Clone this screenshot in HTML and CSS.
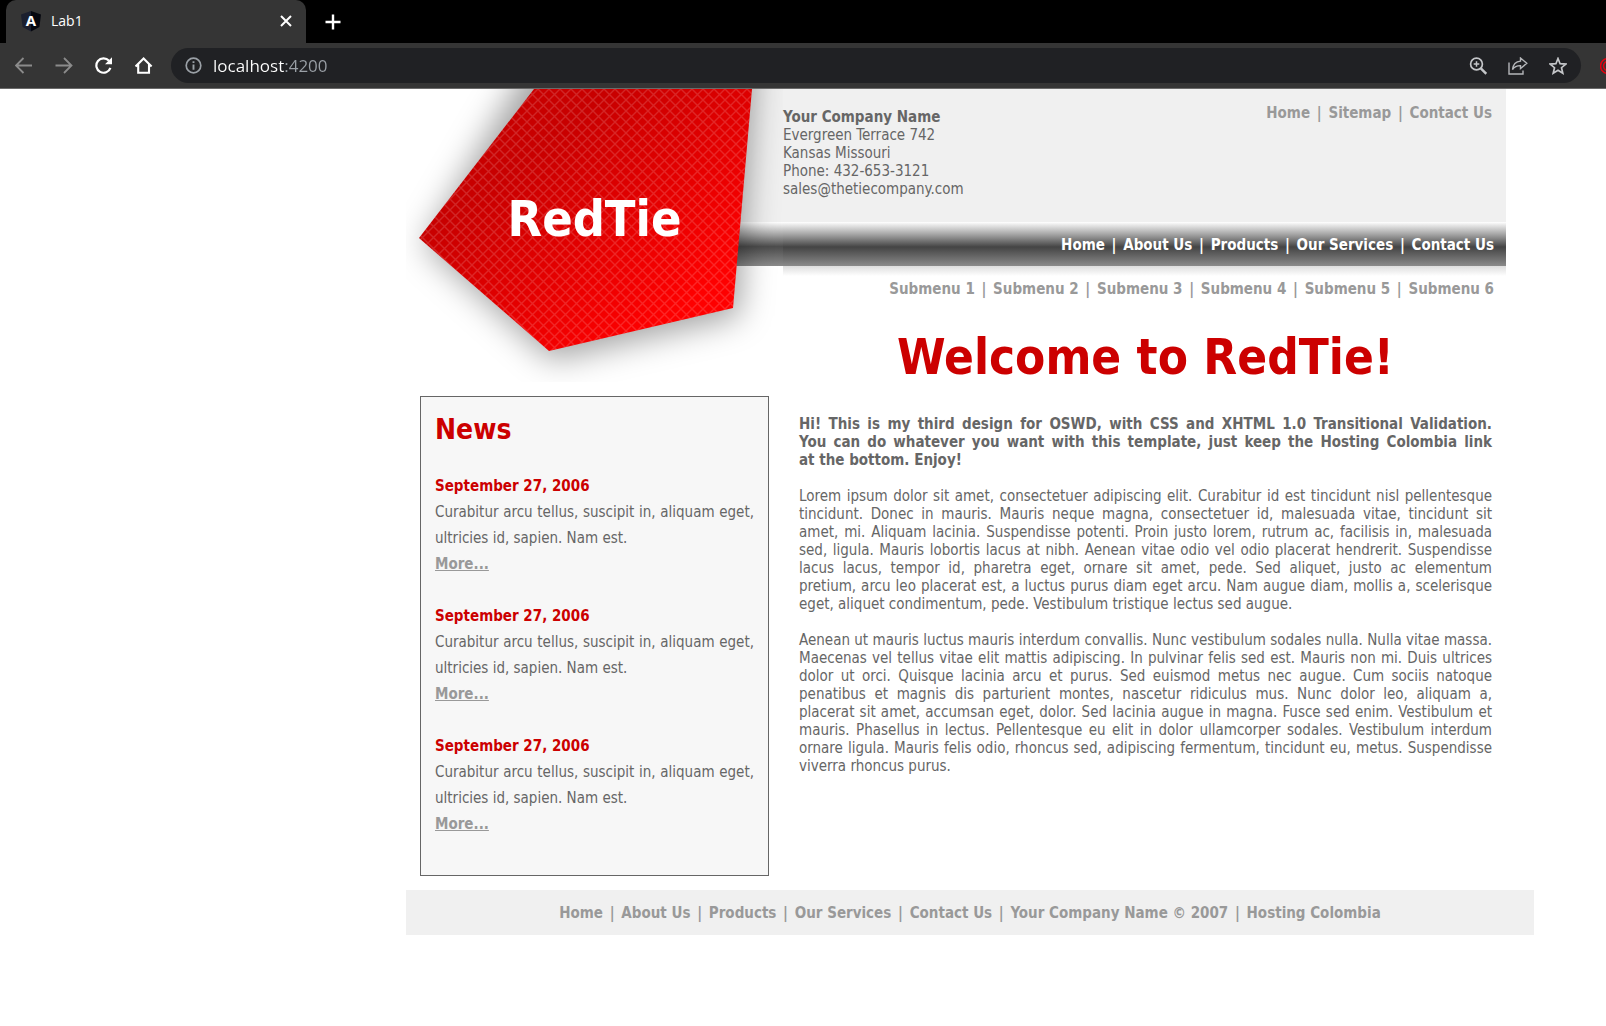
FILE: index.html
```html
<!DOCTYPE html>
<html lang="en">
<head>
<meta charset="utf-8">
<title>Lab1</title>
<link rel="stylesheet" href="styles.css">
</head>
<body>
<div class="browser">
  <div class="tabs">
    <div class="tab">
      <svg class="favicon" width="20" height="20" viewBox="0 0 20 20"><path d="M10 0 20 3.500 18.400 16 10 20.500Z" fill="#05070f"/><path d="M10 0 0 3.500 1.600 16 10 20.500Z" fill="#1b1f2e"/><text x="10" y="15" text-anchor="middle" class="mark">A</text></svg>
      <span class="tab-title">Lab1</span>
      <button class="icon" aria-label="Close tab"><svg width="12" height="12" viewBox="0 0 12 12" fill="none" stroke="#fff" stroke-width="2"><path d="M1 1 11 11M11 1 1 11"/></svg></button>
    </div>
    <button class="icon new-tab" aria-label="New tab"><svg width="16" height="16" viewBox="0 0 16 16" fill="none" stroke="#fff" stroke-width="2.400"><path d="M8 .5V15.500M.5 8H15.500"/></svg></button>
  </div>
  <div class="toolbar">
    <div class="controls">
      <button class="icon" aria-label="Back"><svg width="18" height="18" viewBox="0 0 18 18" fill="none" stroke="#8b8b8b" stroke-width="1.800"><path d="M17 8.500H1.500M8.500 1 1 8.500 8.500 16"/></svg></button>
      <button class="icon" aria-label="Forward"><svg width="18" height="18" viewBox="0 0 18 18" fill="none" stroke="#8b8b8b" stroke-width="1.800"><path d="M.5 8.500H16M9 1 16.500 8.500 9 16"/></svg></button>
      <button class="icon" aria-label="Reload"><svg width="18" height="18" viewBox="0 0 18 18"><path d="M15.400 10.800A7.200 7.200 0 1 1 14 3.800" fill="none" stroke="#fff" stroke-width="2.200"/><path d="M17 .3V7.300H10Z" fill="#fff"/></svg></button>
      <button class="icon" aria-label="Home page"><svg width="18" height="18" viewBox="0 0 18 18" fill="none" stroke="#fff" stroke-width="2.100"><path d="M.6 9.500 8.600 1.500 16.600 9.500M3.200 7.500V15.800H14V7.500"/></svg></button>
    </div>
    <div class="omnibox">
      <svg width="18" height="18" viewBox="0 0 18 18"><circle cx="8.500" cy="8.500" r="7.300" fill="none" stroke="#9aa0a6" stroke-width="1.700"/><path d="M8.500 7.500V12.800M8.500 4.200V6.100" stroke="#9aa0a6" stroke-width="1.900"/></svg>
      <input class="address" type="text" aria-label="Address" value="localhost:4200">
      <button class="icon" aria-label="Zoom"><svg width="18" height="18" viewBox="0 0 18 18" fill="none" stroke="#c4c6c9"><circle cx="7.500" cy="7" r="5.900" stroke-width="1.700"/><path d="M11.800 11.300 17.300 16.800" stroke-width="2.400"/><path d="M4.700 7H10.300M7.500 4.200V9.800" stroke-width="1.500"/></svg></button>
      <button class="icon" aria-label="Share"><svg width="20" height="18" viewBox="0 0 20 18" fill="none" stroke="#b4b6b9" stroke-width="1.400"><path d="M1 5.500V17H15V13.500"/><path d="M12.500 1 18.800 6.300 12.500 11.600V8.600C9 8.500 6.500 9.600 4.500 12.500 5 7.800 8 4.500 12.500 4.100Z"/></svg></button>
      <button class="icon" aria-label="Bookmark"><svg width="18" height="18" viewBox="0 0 18 18" fill="none" stroke="#c4c6c9" stroke-width="1.700"><path d="M9 1.500 11.100 6.700 16.800 7.100 12.500 10.700 13.800 16.200 9 13.200 4.200 16.200 5.500 10.700 1.200 7.100 6.900 6.700Z"/></svg></button>
    </div>
    <svg class="extension" width="6" height="18" viewBox="0 0 6 18" fill="none" stroke="#e2000f" stroke-width="1.600"><circle cx="8" cy="9" r="7.500"/><circle cx="8" cy="9" r="4.500"/></svg>
  </div>
</div>

<div class="page">
  <div class="columns">
    <aside class="side">
      <div class="logo">
        <svg width="377" height="293" viewBox="0 0 377 293">
          <defs>
            <linearGradient id="silk" gradientUnits="userSpaceOnUse" x1="130" y1="60" x2="260" y2="230"><stop offset="0" stop-color="#c80000"/><stop offset="1" stop-color="#fe0000"/></linearGradient>
            <linearGradient id="steel" x1="0" y1="0" x2="0" y2="1"><stop offset="0" stop-color="#fff"/><stop offset=".07" stop-color="#e8e8e8"/><stop offset=".3" stop-color="#a0a0a0"/><stop offset=".56" stop-color="#4c4c4c"/><stop offset="1" stop-color="#8a8a8a"/></linearGradient>
            <pattern id="weave" width="11" height="11" patternUnits="userSpaceOnUse"><path d="M-1-1 12 12M-1 12 12-1" stroke="#fff" stroke-opacity=".15" stroke-width="1.400" fill="none"/></pattern>
            <filter id="soft" x="-20%" y="-20%" width="140%" height="140%"><feGaussianBlur stdDeviation="16"/></filter>
          </defs>
          <path d="M330 0H377V133H320Z" fill="#f0f0f0"/>
          <path d="M300 133H377V177H300Z" fill="url(#steel)"/>
          <path d="M128-40H348L331 223 144 267 16 152Z" transform="translate(2 4)" fill="#000" fill-opacity=".36" filter="url(#soft)"/>
          <path d="M128 0H346L327 219 143 262 13 149Z" fill="url(#silk)"/>
          <path d="M128 0H346L327 219 143 262 13 149Z" fill="url(#weave)"/>
        </svg>
        <span class="brand">RedTie</span>
      </div>
      <section class="news">
        <h2>News</h2>
        <article><h3>September 27, 2006</h3><p>Curabitur arcu tellus, suscipit in, aliquam eget, ultricies id, sapien. Nam est.</p><a href="#">More...</a></article>
        <article><h3>September 27, 2006</h3><p>Curabitur arcu tellus, suscipit in, aliquam eget, ultricies id, sapien. Nam est.</p><a href="#">More...</a></article>
        <article><h3>September 27, 2006</h3><p>Curabitur arcu tellus, suscipit in, aliquam eget, ultricies id, sapien. Nam est.</p><a href="#">More...</a></article>
      </section>
    </aside>
    <div class="body">
      <header class="top">
        <address class="company"><strong>Your Company Name</strong><br>Evergreen Terrace 742<br>Kansas Missouri<br>Phone: 432-653-3121<br>sales@thetiecompany.com</address>
        <nav class="links"><a href="#">Home</a> | <a href="#">Sitemap</a> | <a href="#">Contact Us</a></nav>
      </header>
      <nav class="links menu"><a href="#">Home</a> | <a href="#">About Us</a> | <a href="#">Products</a> | <a href="#">Our Services</a> | <a href="#">Contact Us</a></nav>
      <nav class="links submenu"><a href="#">Submenu 1</a> | <a href="#">Submenu 2</a> | <a href="#">Submenu 3</a> | <a href="#">Submenu 4</a> | <a href="#">Submenu 5</a> | <a href="#">Submenu 6</a></nav>
      <main class="content">
        <h1>Welcome to RedTie!</h1>
        <p><strong>Hi! This is my third design for OSWD, with CSS and XHTML 1.0 Transitional Validation. <span class="keep">You can</span> do whatever you want with this template, just keep the Hosting Colombia link <span class="keep">at the bottom.</span> Enjoy!</strong></p>
        <p>Lorem ipsum dolor sit amet, consectetuer adipiscing elit. Curabitur id est tincidunt nisl pellentesque tincidunt. Donec in mauris. Mauris neque magna, consectetuer id, malesuada vitae, tincidunt sit amet, mi. Aliquam lacinia. Suspendisse potenti. Proin justo lorem, rutrum ac, facilisis in, malesuada sed, ligula. Mauris lobortis lacus at nibh. Aenean vitae odio vel odio placerat hendrerit. Suspendisse lacus lacus, tempor id, pharetra eget, ornare sit amet, pede. Sed aliquet, justo ac elementum pretium, arcu leo placerat est, a luctus purus diam eget arcu. Nam augue diam, mollis a, scelerisque eget, aliquet condimentum, pede. Vestibulum tristique lectus sed augue.</p>
        <p>Aenean ut mauris luctus mauris interdum convallis. Nunc vestibulum sodales nulla. Nulla vitae massa. Maecenas vel tellus vitae elit mattis adipiscing. In pulvinar felis sed est. Mauris non mi. Duis ultrices dolor ut orci. Quisque lacinia arcu et purus. Sed euismod metus nec augue. Cum sociis natoque penatibus et magnis dis parturient montes, nascetur ridiculus mus. Nunc dolor leo, aliquam a, placerat sit amet, accumsan eget, dolor. Sed lacinia augue in magna. Fusce sed enim. Vestibulum et mauris. Phasellus in lectus. Pellentesque eu elit in dolor ullamcorper sodales. Vestibulum interdum ornare ligula. Mauris felis odio, rhoncus sed, adipiscing fermentum, tincidunt eu, metus. Suspendisse viverra rhoncus purus.</p>
      </main>
    </div>
  </div>
  <footer class="links footer"><a href="#">Home</a> | <a href="#">About Us</a> | <a href="#">Products</a> | <a href="#">Our Services</a> | <a href="#">Contact Us</a> | <a href="#">Your Company Name © 2007</a> | <a href="#">Hosting Colombia</a></footer>
</div>
</body>
</html>
```
FILE: styles.css
```css
* { box-sizing: border-box; }
body {
  margin: 0;
  background: #fff;
  color: #666;
  font-family: Tahoma, "DejaVu Sans Condensed", "DejaVu Sans", sans-serif;
  font-size: 15px;
  line-height: 18px;
}
h1, h2, h3, p { margin: 0; }
a { color: inherit; text-decoration: none; }
svg { display: block; flex: none; }

/* Browser frame */
.browser { background: #000; font-family: "Segoe UI", "Open Sans", sans-serif; }
.icon { display: flex; padding: 0; border: 0; background: none; }
.tabs { display: flex; align-items: center; height: 43px; padding-left: 6px; }
.tab {
  display: flex;
  align-items: center;
  width: 300px;
  height: 43px;
  padding: 0 14px 2px 15px;
  border-radius: 10px 10px 0 0;
  background: #353535;
  color: #fff;
}
.tab-title { flex: 1; padding-left: 10px; font-size: 14px; }
.favicon { overflow: visible; }
.mark { fill: #fff; font: bold 15px "Open Sans", sans-serif; }
.new-tab { margin-left: 19px; }
.toolbar {
  display: flex;
  align-items: center;
  height: 46px;
  padding-left: 15px;
  border-bottom: 1px solid #6a6a6a;
  background: #353535;
}
.controls { display: flex; gap: 22px; }
.omnibox {
  display: flex;
  flex: 1;
  align-items: center;
  gap: 21px;
  height: 35px;
  margin: 0 19px 0 18px;
  padding: 0 14px;
  border-radius: 18px;
  background: #202124;
}
.address {
  flex: 1;
  min-width: 0;
  margin-left: -11px;
  padding: 0;
  border: 0;
  outline: 0;
  background: linear-gradient(90deg, #fff 71px, #9aa0a6 71px);
  -webkit-background-clip: text;
  background-clip: text;
  color: transparent;
  font: 17px "Segoe UI", "Open Sans", sans-serif;
}

/* Site */
.page { padding: 0 72px 80px 406px; }
.columns { display: grid; grid-template-columns: 377px 1fr; margin-right: 28px; }
.logo { display: grid; place-items: center; }
.logo > * { grid-area: 1 / 1; }
.brand { color: #fff; font-size: 50px; font-weight: bold; line-height: 60px; padding-bottom: 34px; }
.news {
  margin: 14px;
  padding: 15px 14px 12px;
  border: 1px solid #666;
  background: #f7f7f7;
  line-height: 26px;
  text-align: justify;
}
.news h2 { margin-bottom: 25px; color: #c00; font-size: 28px; line-height: 36px; }
.news h3 { color: #c00; font-size: 15px; }
.news article { padding-bottom: 26px; }
.news article > a { display: block; width: max-content; color: #999; font-weight: bold; text-decoration: underline; }

.links { color: #999; font-weight: bold; text-align: right; }
.links a:not(:last-child) { margin-right: 2px; }
.links a:not(:first-child) { margin-left: 2px; }
.top {
  display: flex;
  justify-content: space-between;
  height: 133px;
  padding: 15px 14px 0 0;
  background: #f0f0f0;
}
.company { padding-top: 4px; font-style: normal; }
.menu {
  height: 44px;
  padding: 14px 12px 0;
  background: linear-gradient(#fff, #e8e8e8 3px, #a0a0a0 13px, #444 25px, #8a8a8a);
  color: #fff;
}
.submenu { padding: 14px 12px 0; background: linear-gradient(#ddd, #fff 10px); }
.content { padding: 29px 14px 0 16px; text-align: justify; }
.content h1 { margin-bottom: 26px; color: #c00; font-size: 49px; line-height: 62px; text-align: center; }
.content p { margin-bottom: 18px; }
.keep { white-space: nowrap; }
.footer { padding: 14px 14px 13px; background: #f0f0f0; text-align: center; }
```
